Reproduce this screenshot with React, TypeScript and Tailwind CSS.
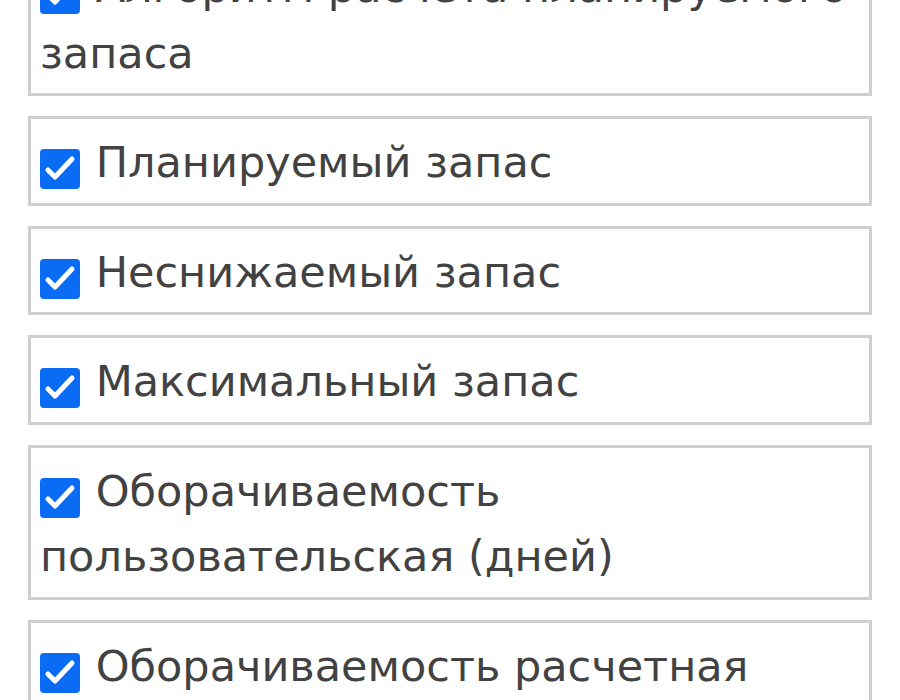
const fields = [
  "Алгоритм расчета планируемого запаса",
  "Планируемый запас",
  "Неснижаемый запас",
  "Максимальный запас",
  "Оборачиваемость пользовательская (дней)",
  "Оборачиваемость расчетная (дней)",
]

function CheckMark() {
  return (
    <span className="inline-block w-[40px] h-[40px] mr-[2px] rounded-[4px] bg-[#0a6cf5] align-[-12px]">
      <svg viewBox="0 0 40 40" className="w-full h-full">
        <path
          d="M8 21 L15 28 L32 10"
          fill="none"
          stroke="white"
          strokeWidth="5"
          strokeLinecap="round"
          strokeLinejoin="round"
        />
      </svg>
    </span>
  )
}

export default function App() {
  return (
    <div className="min-h-[700px] bg-white overflow-hidden">
      <div className="px-[28px] mt-[-59px] flex flex-col gap-5 font-['DejaVu_Sans',sans-serif] text-[43px] leading-[65.5px] text-[#424242]">
        {fields.map((label) => (
          <label key={label} className="block border-[3px] border-[#cfcfcf] px-[9px] pt-[11px] pb-[7px]">
            <CheckMark /> {label}
          </label>
        ))}
      </div>
    </div>
  )
}
